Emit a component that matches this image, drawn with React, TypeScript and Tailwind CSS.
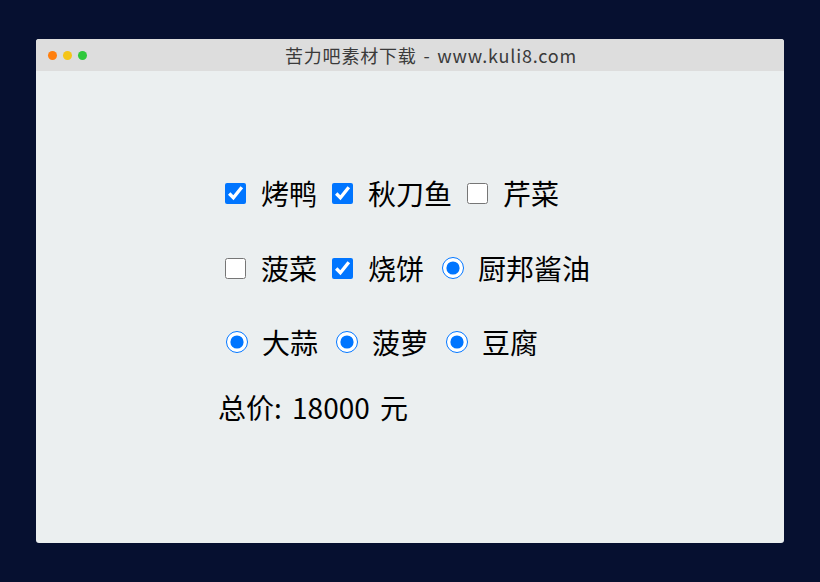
import React from "react";

const cjk = { fontFamily: '"Noto Sans CJK SC", "Noto Sans", sans-serif' };

function Check({ label, checked }: { label: string; checked?: boolean }) {
  return (
    <label className="flex items-center mr-[8px]">
      <input type="checkbox" defaultChecked={checked} className="ml-[7px] mr-[15px] w-[21px] h-[21px] m-0" />
      <span className="text-[28px] leading-[40px] text-black">{label}</span>
    </label>
  );
}

function Radio({ label, first }: { label: string; first?: boolean }) {
  return (
    <label className="flex items-center mr-[8px]">
      <input
        type="radio"
        defaultChecked
        className={(first ? "ml-[8px]" : "ml-[10px]") + " mr-[14px] w-[22px] h-[22px] m-0"}
      />
      <span className="text-[28px] leading-[40px] text-black">{label}</span>
    </label>
  );
}

export default function App() {
  return (
    <div className="w-[820px] h-[582px] bg-[#061030] flex items-center justify-center" style={cjk}>
      <div className="w-[748px] h-[504px] bg-[#ebeff0] rounded-[3px] overflow-hidden flex flex-col">
        <div className="h-[32px] bg-[#dddddd] flex items-center shrink-0">
          <div className="flex items-center gap-[6px] pl-[12px] shrink-0">
            <span className="w-[9px] h-[9px] rounded-full bg-[#ff7f0e]" />
            <span className="w-[9px] h-[9px] rounded-full bg-[#f5c518]" />
            <span className="w-[9px] h-[9px] rounded-full bg-[#2fc83b]" />
          </div>
          <div className="flex-1 text-center pr-[9px] text-[18px] leading-[32px] text-[#3a3a3a] tracking-[0.8px] [word-spacing:2px]">
            苦力吧素材下载 - www.kuli8.com
          </div>
        </div>
        <div className="flex flex-col pt-[102px] pl-[182px]">
          <div className="flex items-center h-[40px]">
            <Check label="烤鸭" checked />
            <Check label="秋刀鱼" checked />
            <Check label="芹菜" />
          </div>
          <div className="flex items-center h-[40px] mt-[35px]">
            <Check label="菠菜" />
            <Check label="烧饼" checked />
            <Radio label="厨邦酱油" />
          </div>
          <div className="flex items-center h-[40px] mt-[34px]">
            <Radio label="大蒜" first />
            <Radio label="菠萝" />
            <Radio label="豆腐" />
          </div>
          <div className="h-[40px] mt-[25px] text-[28px] leading-[40px] text-black [word-spacing:4px]">总价: 18000 元</div>
        </div>
      </div>
    </div>
  );
}
